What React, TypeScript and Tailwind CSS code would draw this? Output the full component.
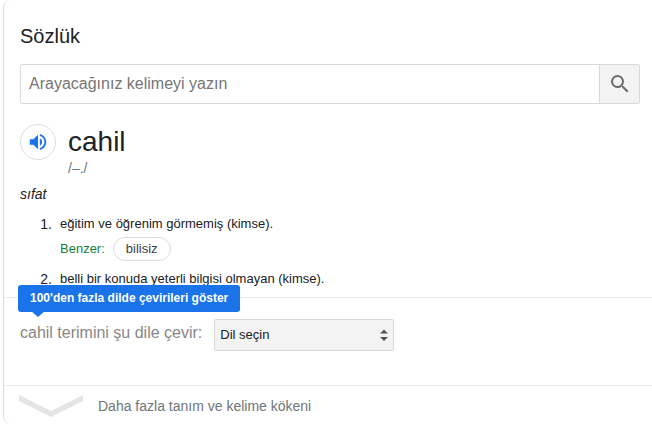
import { FormEvent, useState } from 'react';

const languages = ['Almanca', 'Arapça', 'Fransızca', 'İngilizce', 'İspanyolca', 'Rusça'];

const definitions = [
  { id: 1, text: 'eğitim ve öğrenim görmemiş (kimse).', similar: ['bilisiz'] },
  { id: 2, text: 'belli bir konuda yeterli bilgisi olmayan (kimse).', similar: [] },
];

function SearchForm() {
  const [query, setQuery] = useState('');

  const handleSubmit = (event: FormEvent) => {
    event.preventDefault();
  };

  return (
    <form onSubmit={handleSubmit} className="mt-4 flex h-10 rounded-xs border border-[#d9d9d9]">
      <input
        type="text"
        value={query}
        onChange={(event) => setQuery(event.target.value)}
        aria-label="Arayacağınız kelimeyi yazın"
        placeholder="Arayacağınız kelimeyi yazın"
        className="min-w-0 flex-1 px-2 text-base text-[#202124] outline-none placeholder:text-[#757575]"
      />
      <button
        type="submit"
        aria-label="Ara"
        className="flex w-10 items-center justify-center border-l border-[#d9d9d9] bg-[#f3f3f3]"
      >
        <svg viewBox="0 0 24 24" className="size-6 fill-[#6b6b6b]">
          <path d="M15.5 14h-.79l-.28-.27A6.47 6.47 0 0 0 16 9.5 6.5 6.5 0 1 0 9.5 16c1.61 0 3.09-.59 4.23-1.57l.27.28v.79l5 4.99L20.49 19l-4.99-5zm-6 0C7.01 14 5 11.99 5 9.5S7.01 5 9.5 5 14 7.01 14 9.5 11.99 14 9.5 14z" />
        </svg>
      </button>
    </form>
  );
}

function DefinitionList() {
  return (
    <ol className="mt-[10px] space-y-2">
      {definitions.map((item) => (
        <li key={item.id} className="flex text-[13px] leading-5 text-[#202124]">
          <span className="w-10 shrink-0 pr-2 text-right text-sm leading-5">{item.id}.</span>
          <div>
            <p>{item.text}</p>
            {item.similar.length > 0 && (
              <div className="mt-[3px] flex items-center gap-2">
                <span className="text-[#188038]">Benzer:</span>
                {item.similar.map((word) => (
                  <button key={word} type="button" className="h-6 rounded-full border border-[#dadce0] px-3 text-[#3c4043]">
                    {word}
                  </button>
                ))}
              </div>
            )}
          </div>
        </li>
      ))}
    </ol>
  );
}

function TranslateBar() {
  const [language, setLanguage] = useState('');

  return (
    <section className="relative flex items-center gap-3 border-t border-[#ebebeb] pt-[21px] pr-3 pb-[34px] pl-4">
      <div
        role="tooltip"
        className="absolute -top-[13px] left-[14px] rounded-[3px] bg-[#1a73e8] px-3 text-xs leading-[27px] font-bold whitespace-nowrap text-white"
      >
        100'den fazla dilde çevirileri göster
        <svg viewBox="0 0 14 6" className="absolute top-full left-[13px] h-[6px] w-[14px] -translate-y-px fill-[#1a73e8]">
          <path d="M0 0h14L7 6z" />
        </svg>
      </div>
      <label htmlFor="language" className="pb-1 text-base text-[#878787]">
        cahil terimini şu dile çevir:
      </label>
      <div className="relative w-[180px]">
        <select
          id="language"
          value={language}
          onChange={(event) => setLanguage(event.target.value)}
          className="block h-8 w-full appearance-none rounded-xs border border-[#d9d9d9] bg-[#f3f3f3] pr-6 pl-[5px] text-[13px] text-[#202124]"
        >
          <option value="">Dil seçin</option>
          {languages.map((name) => (
            <option key={name} value={name}>
              {name}
            </option>
          ))}
        </select>
        <svg viewBox="0 0 8 12" className="pointer-events-none absolute top-[10px] right-[6px] h-3 w-2 fill-[#555]">
          <path d="M4 0.5l4 4H0zM4 12l4-4H0z" />
        </svg>
      </div>
    </section>
  );
}

export default function App() {
  return (
    <main className="bg-white font-['Liberation_Sans',Arial,sans-serif]">
      <div className="ml-[3px] rounded-l-lg border-l border-[#dadce0]">
        <section className="pt-6 pr-3 pb-2 pl-4">
          <h1 className="text-xl leading-6 text-[#202124]">Sözlük</h1>
          <SearchForm />
          <div className="mt-5 flex gap-3">
            <button
              type="button"
              aria-label="Telaffuzu dinle"
              className="flex size-9 items-center justify-center rounded-full border border-[#dadce0]"
            >
              <svg viewBox="0 0 24 24" className="size-[22px] fill-[#1a73e8]">
                <path d="M3 9v6h4l5 5V4L7 9H3zm13.5 3A4.5 4.5 0 0 0 14 7.97v8.05c1.48-.73 2.5-2.25 2.5-4.02zM14 3.23v2.06c2.89.86 5 3.54 5 6.71s-2.11 5.85-5 6.71v2.06c4.01-.91 7-4.49 7-8.77s-2.99-7.86-7-8.77z" />
              </svg>
            </button>
            <div>
              <h2 className="text-[28px] leading-9 text-[#202124]">cahil</h2>
              <p className="text-sm leading-4 text-[#70757a]">/–./</p>
            </div>
          </div>
          <p className="mt-2 text-sm leading-5 text-[#202124] italic">sıfat</p>
          <DefinitionList />
        </section>
        <TranslateBar />
        <button
          type="button"
          className="flex w-full items-center gap-[15px] border-t border-[#ebebeb] pt-[9px] pb-[7px] pl-[15px] text-sm text-[#70757a]"
        >
          <svg viewBox="0 0 64 22" className="h-[22px] w-16 fill-[#e5e5e5]">
            <path d="M0 0l32 16L64 0v6L32 22 0 6z" />
          </svg>
          Daha fazla tanım ve kelime kökeni
        </button>
      </div>
    </main>
  );
}
